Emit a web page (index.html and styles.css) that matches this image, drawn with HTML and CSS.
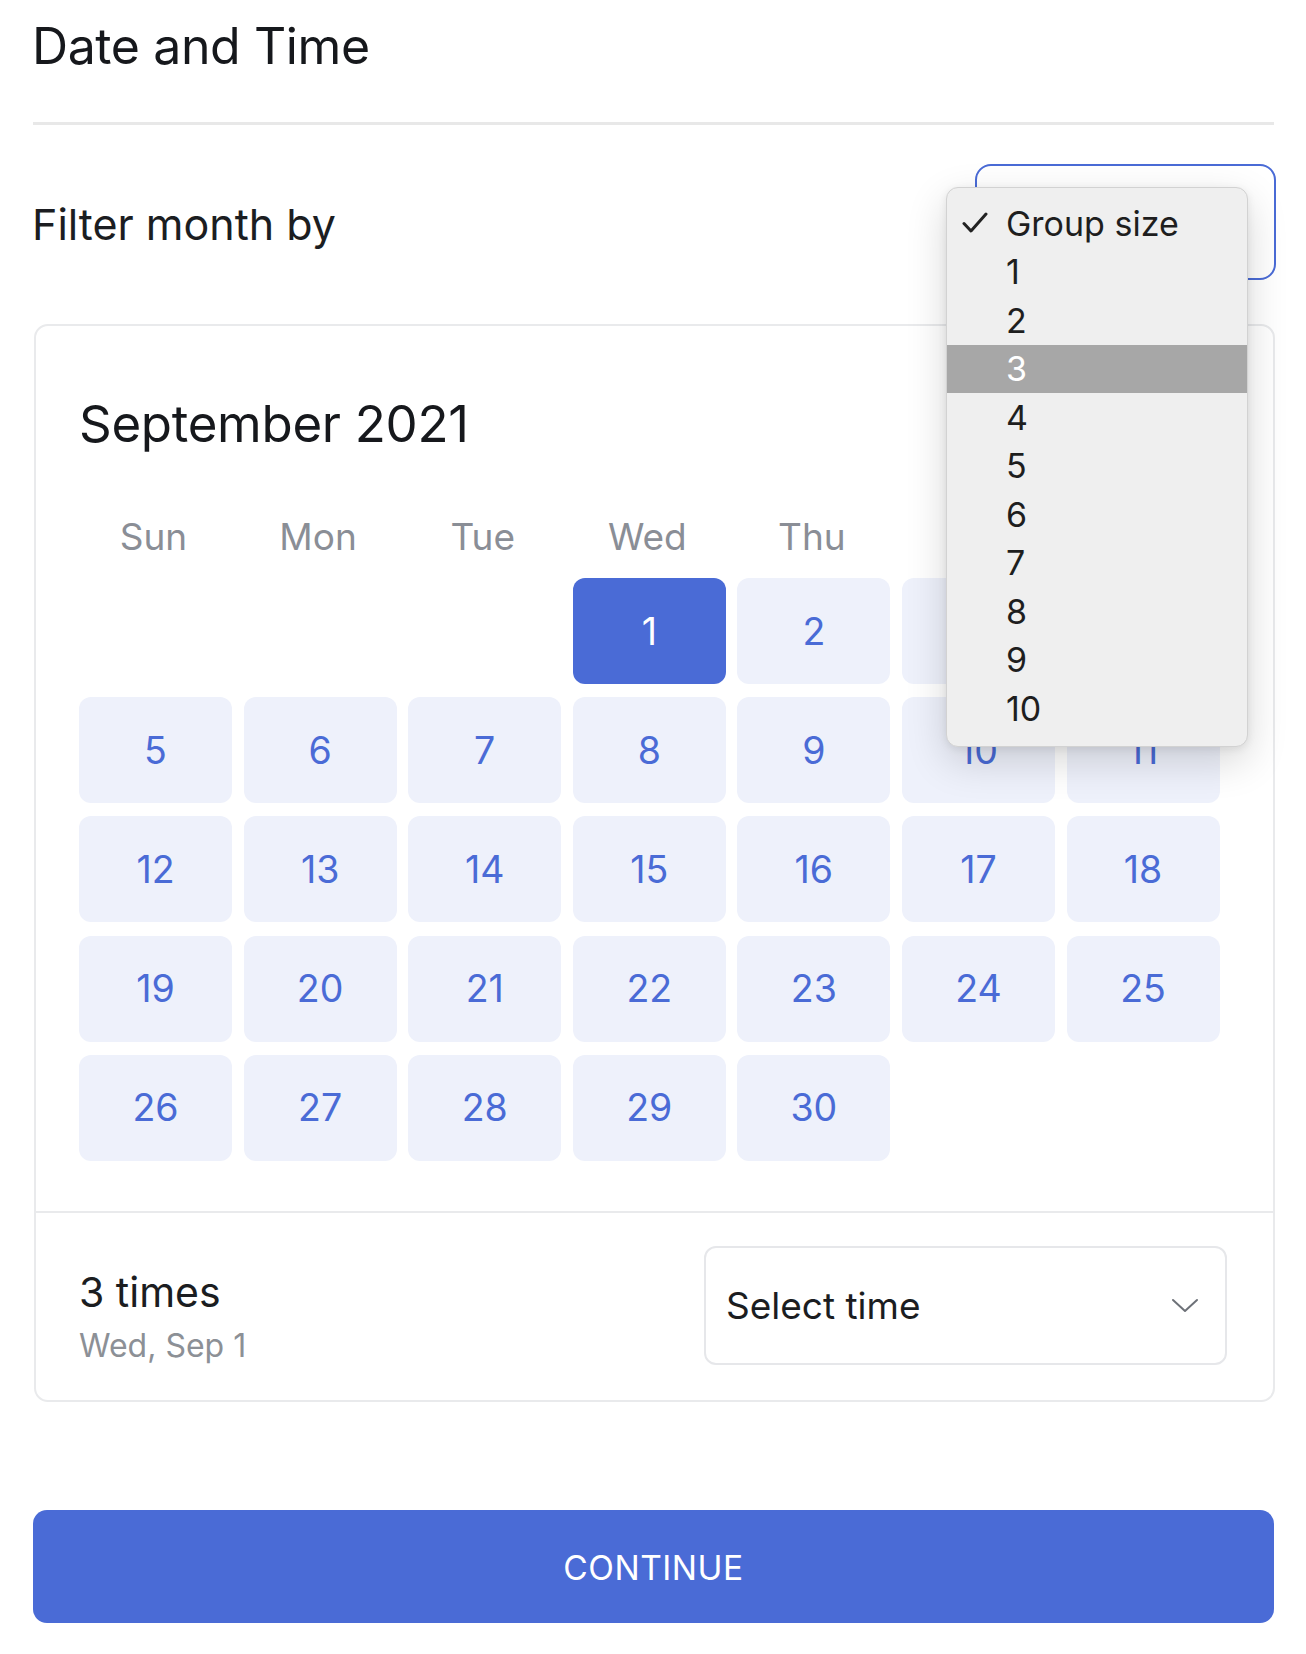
FILE: index.html
```html
<!DOCTYPE html>
<html lang="en">
<head>
<meta charset="utf-8">
<title>Date and Time</title>
<link rel="stylesheet" href="styles.css">
</head>
<body>
<div class="page">
  <header class="header">
    <h1 class="title">Date and Time</h1>
  </header>

  <div class="filter-row">
    <span class="filter-label">Filter month by</span>
    <div class="select-wrap">
      <div class="select-box"></div>
      <ul class="menu">
        <li class="menu-item checked">
          <svg class="check" viewBox="0 0 26 22" width="26" height="22"><path d="M2 11.5 L9 19 L24 2" fill="none" stroke="#222" stroke-width="3" stroke-linecap="round" stroke-linejoin="round"/></svg>
          <span>Group size</span>
        </li>
        <li class="menu-item"><span>1</span></li>
        <li class="menu-item"><span>2</span></li>
        <li class="menu-item active"><span>3</span></li>
        <li class="menu-item"><span>4</span></li>
        <li class="menu-item"><span>5</span></li>
        <li class="menu-item"><span>6</span></li>
        <li class="menu-item"><span>7</span></li>
        <li class="menu-item"><span>8</span></li>
        <li class="menu-item"><span>9</span></li>
        <li class="menu-item"><span>10</span></li>
      </ul>
    </div>
  </div>

  <section class="card">
    <div class="cal">
      <h2 class="month">September 2021</h2>
      <div class="grid weekdays">
        <div class="wd">Sun</div>
        <div class="wd">Mon</div>
        <div class="wd">Tue</div>
        <div class="wd">Wed</div>
        <div class="wd">Thu</div>
        <div class="wd">Fri</div>
        <div class="wd">Sat</div>
      </div>
      <div class="grid days">
        <div class="blank"></div>
        <div class="blank"></div>
        <div class="blank"></div>
        <div class="day selected">1</div>
        <div class="day">2</div>
        <div class="day">3</div>
        <div class="day">4</div>
        <div class="day">5</div>
        <div class="day">6</div>
        <div class="day">7</div>
        <div class="day">8</div>
        <div class="day">9</div>
        <div class="day">10</div>
        <div class="day">11</div>
        <div class="day">12</div>
        <div class="day">13</div>
        <div class="day">14</div>
        <div class="day">15</div>
        <div class="day">16</div>
        <div class="day">17</div>
        <div class="day">18</div>
        <div class="day">19</div>
        <div class="day">20</div>
        <div class="day">21</div>
        <div class="day">22</div>
        <div class="day">23</div>
        <div class="day">24</div>
        <div class="day">25</div>
        <div class="day">26</div>
        <div class="day">27</div>
        <div class="day">28</div>
        <div class="day">29</div>
        <div class="day">30</div>
      </div>
    </div>
    <div class="card-footer">
      <div class="times">
        <div class="times-count">3 times</div>
        <div class="times-date">Wed, Sep 1</div>
      </div>
      <div class="time-select">
        <span class="time-select-label">Select time</span>
        <svg class="chevron" viewBox="0 0 28 15" width="28" height="15"><polyline points="2,2 14,13 26,2" fill="none" stroke="#6d7178" stroke-width="2" stroke-linecap="round" stroke-linejoin="round"/></svg>
      </div>
    </div>
  </section>

  <button class="continue" type="button">CONTINUE</button>
</div>
</body>
</html>
```

FILE: styles.css
```css
* {
  box-sizing: border-box;
}

html, body {
  margin: 0;
  padding: 0;
  background: #ffffff;
}

body {
  font-family: Inter, "Noto Sans", "Liberation Sans", sans-serif;
  color: #16181c;
}

.page {
  width: 1306px;
  padding: 0 32px 0 33px;
}

/* Header */
.header {
  padding-top: 16px;
  padding-bottom: 46px;
  border-bottom: 3px solid #e8e8e8;
}

.title {
  margin: 0 0 0 -1px;
  font-size: 50px;
  line-height: 60px;
  font-weight: 400;
  letter-spacing: -0.4px;
  color: #16181c;
}

/* Filter row */
.filter-row {
  margin-top: 39px;
  display: flex;
  align-items: center;
  justify-content: space-between;
  height: 116px;
}

.filter-label {
  font-size: 43px;
  line-height: 52px;
  color: #1b1d21;
  margin-top: 4px;
  margin-left: -1px;
}

.select-wrap {
  position: relative;
  width: 301px;
  height: 116px;
  margin-right: -2px;
}

.select-box {
  width: 100%;
  height: 100%;
  border: 2px solid #4a6bd6;
  border-radius: 16px;
  background: #fff;
}

.menu {
  position: absolute;
  left: -29px;
  top: 23px;
  z-index: 10;
  width: 302px;
  margin: 0;
  padding: 11px 0 13px;
  list-style: none;
  background: #efefef;
  border: 1px solid #d2d2d2;
  border-radius: 12px;
  box-shadow: 0 14px 40px rgba(0, 0, 0, 0.16), 0 2px 8px rgba(0, 0, 0, 0.08);
}

.menu-item {
  position: relative;
  height: 48.5px;
  display: flex;
  align-items: center;
  padding-left: 59px;
  font-size: 34px;
  color: #1e1e1e;
}

.menu-item.active {
  background: #a7a7a7;
  color: #ffffff;
}

.check {
  position: absolute;
  left: 15px;
  top: 13px;
}

/* Card */
.card {
  margin-top: 44px;
  border: 2px solid #e9eaec;
  border-radius: 14px;
  margin-right: -1px;
  margin-left: 1px;
}

.cal {
  padding: 69px 45px 50px 43px;
}

.month {
  margin: 0;
  font-size: 51px;
  line-height: 58px;
  font-weight: 400;
  letter-spacing: -0.3px;
  color: #16181c;
}

.grid {
  display: grid;
  grid-template-columns: repeat(7, 153px);
  column-gap: 11.6px;
}

.weekdays {
  margin-top: 62px;
}

.wd {
  text-align: center;
  font-size: 37px;
  line-height: 44px;
  color: #8a8e96;
  padding-right: 4px;
}

.days {
  margin-top: 19px;
  row-gap: 13.2px;
}

.day {
  height: 106px;
  border-radius: 12px;
  background: #eef1fb;
  color: #4a6bd6;
  font-size: 37.5px;
  display: flex;
  align-items: center;
  justify-content: center;
}

.day.selected {
  background: #4a6bd6;
  color: #ffffff;
}

/* Footer */
.card-footer {
  border-top: 2px solid #e9eaec;
  padding: 33px 46px 35px 43px;
  display: flex;
  align-items: flex-end;
  justify-content: space-between;
}

.times-count {
  font-size: 41px;
  line-height: 50px;
  color: #1b1d21;
}

.times-date {
  margin-top: 9px;
  margin-bottom: -1px;
  font-size: 32px;
  line-height: 40px;
  color: #8c9096;
}

.time-select {
  width: 523px;
  height: 119px;
  border: 2px solid #e6e7ea;
  border-radius: 12px;
  display: flex;
  align-items: center;
  justify-content: space-between;
  padding: 0 26px 0 20px;
}

.time-select-label {
  font-size: 37px;
  color: #1b1d21;
}

/* Continue */
.continue {
  display: block;
  width: 100%;
  height: 113px;
  margin-top: 108px;
  padding-top: 4px;
  border: none;
  border-radius: 14px;
  background: #4a6bd6;
  color: #ffffff;
  font-family: Inter, "Noto Sans", "Liberation Sans", sans-serif;
  font-size: 33.5px;
  letter-spacing: 0.5px;
  cursor: pointer;
}
```
